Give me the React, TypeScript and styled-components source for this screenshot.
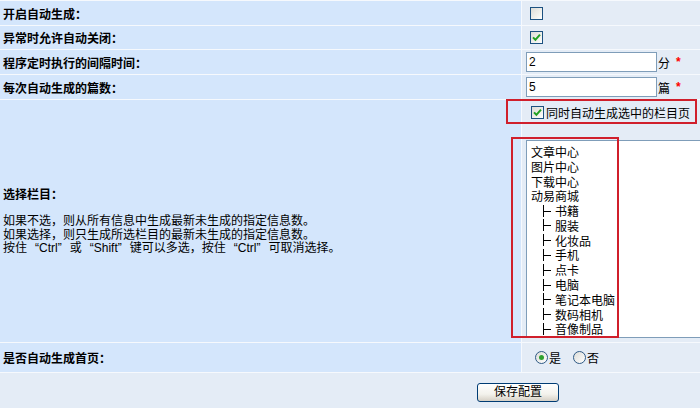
import styled, { createGlobalStyle } from 'styled-components';

const GlobalStyle = createGlobalStyle`
  body {
    margin: 0;
    overflow: hidden;
    background: #ffffff;
    font-family: "Liberation Sans", "Noto Sans CJK SC", sans-serif;
    font-size: 12px;
    color: #000;
  }
`;

interface listItem {
  name: string;
  sub?: boolean;
}

const columns: listItem[] = [
  { name: '文章中心' },
  { name: '图片中心' },
  { name: '下载中心' },
  { name: '动易商城' },
  { name: '书籍', sub: true },
  { name: '服装', sub: true },
  { name: '化妆品', sub: true },
  { name: '手机', sub: true },
  { name: '点卡', sub: true },
  { name: '电脑', sub: true },
  { name: '笔记本电脑', sub: true },
  { name: '数码相机', sub: true },
  { name: '音像制品', sub: true },
];

function CheckBox({ checked = false }: { checked?: boolean }) {
  return (
    <Box>
      {checked && (
        <svg width="9" height="9" viewBox="0 0 9 9">
          <path d="M1 4.4 L3.4 6.8 L8 1.6" fill="none" stroke="#21a121" strokeWidth="2" />
        </svg>
      )}
    </Box>
  );
}

function Radio({ checked = false }: { checked?: boolean }) {
  return <RadioDot $checked={checked} />;
}

// full-width quotes, like the song-ti glyphs
function Key({ children }: { children: string }) {
  return (
    <>
      <Quote $open>“</Quote>
      {children}
      <Quote>”</Quote>
    </>
  );
}

export default function App() {
  return (
    <>
      <GlobalStyle />
      <Table>
        <Label>开启自动生成：</Label>
        <Value>
          <CheckMargin>
            <CheckBox />
          </CheckMargin>
        </Value>

        <Label>异常时允许自动关闭：</Label>
        <Value>
          <CheckMargin>
            <CheckBox checked />
          </CheckMargin>
        </Value>

        <Label>程序定时执行的间隔时间：</Label>
        <Value>
          <TextInput defaultValue="2" readOnly />
          <Unit>分</Unit>
          <Star>*</Star>
        </Value>

        <Label>每次自动生成的篇数：</Label>
        <Value>
          <TextInput defaultValue="5" readOnly />
          <Unit>篇</Unit>
          <Star>*</Star>
        </Value>

        <HelpLabel>
          <strong>选择栏目：</strong>
          <HelpText>
            如果不选，则从所有信息中生成最新未生成的指定信息数。
            <br />
            如果选择，则只生成所选栏目的最新未生成的指定信息数。
            <br />
            按住<Key>Ctrl</Key>或<Key>Shift</Key>键可以多选，按住<Key>Ctrl</Key>可取消选择。
          </HelpText>
        </HelpLabel>
        <ColumnCell>
          <SyncRow>
            <CheckBox checked />
            <span>同时自动生成选中的栏目页</span>
          </SyncRow>
          <ListBox>
            {columns.map((item) => (
              <ListItem key={item.name} $sub={item.sub}>
                {item.sub && <Branch />}
                {item.name}
              </ListItem>
            ))}
          </ListBox>
          <SyncMark />
          <ListMark />
        </ColumnCell>

        <Label>是否自动生成首页：</Label>
        <RadioCell>
          <RadioOption>
            <Radio checked />是
          </RadioOption>
          <RadioOption>
            <Radio />否
          </RadioOption>
        </RadioCell>

        <Footer>
          <SaveButton>保存配置</SaveButton>
        </Footer>
      </Table>
    </>
  );
}

const Table = styled.div`
  display: grid;
  grid-template-columns: 521px 514px;
  grid-template-rows: 24px 23px 24px 24px 242px 29px 38px;
  gap: 1px;
  padding-top: 1px;
  width: 1036px;
  background: #f6f9fd;
`;

const Label = styled.div`
  display: flex;
  align-items: center;
  padding-left: 3px;
  background: #d4e6fc;
  font-weight: bold;
`;

const Value = styled.div`
  display: flex;
  align-items: center;
  padding-left: 4px;
  background: #e4ecf6;
`;

const CheckMargin = styled.span`
  display: inline-flex;
  margin-left: 4px;
`;

const Box = styled.span`
  display: inline-flex;
  align-items: center;
  justify-content: center;
  width: 13px;
  height: 13px;
  box-sizing: border-box;
  border: 1px solid #1c5180;
  background: linear-gradient(135deg, #dcdcd7 0%, #f4f4f0 70%, #ffffff 100%);
`;

const TextInput = styled.input`
  width: 131px;
  height: 20px;
  box-sizing: border-box;
  border: 1px solid #7f9db9;
  padding: 0 2px;
  margin: 0;
  font-family: "Liberation Sans", "Noto Sans CJK SC", sans-serif;
  font-size: 12px;
  background: #ffffff;
  outline: none;
`;

const Unit = styled.span`
  margin-left: 1px;
`;

const Star = styled.span`
  margin-left: 6px;
  color: #ff0000;
  font-weight: bold;
`;

const HelpLabel = styled.div`
  display: flex;
  flex-direction: column;
  justify-content: center;
  padding: 2px 0 0 3px;
  background: #d4e6fc;
  line-height: 14px;
`;

const HelpText = styled.div`
  margin-top: 13px;
  line-height: 13.8px;
`;

const Quote = styled.span<{ $open?: boolean }>`
  display: inline-block;
  width: 12px;
  text-align: ${(props) => (props.$open ? 'right' : 'left')};
`;

const ColumnCell = styled.div`
  position: relative;
  display: flex;
  flex-direction: column;
  align-items: flex-start;
  padding-left: 4px;
  background: #e4ecf6;
`;

const SyncRow = styled.div`
  display: flex;
  align-items: center;
  gap: 2px;
  height: 24px;
  padding-left: 5px;
`;

const ListBox = styled.div`
  width: 300px;
  height: 198px;
  box-sizing: border-box;
  margin-top: 16px;
  padding: 3px 4px;
  border: 1px solid #7f9db9;
  background: #ffffff;
  white-space: nowrap;
`;

const ListItem = styled.div<{ $sub?: boolean }>`
  display: flex;
  align-items: center;
  height: 14.8px;
  padding-left: ${(props) => (props.$sub ? '12px' : '0')};
`;

// the tree branch "├" drawn as two strokes
const Branch = styled.span`
  position: relative;
  flex: none;
  width: 12px;
  height: 12px;
  box-sizing: border-box;
  border-left: 1px solid #000;

  &::after {
    content: '';
    position: absolute;
    left: 0;
    top: 6px;
    width: 7px;
    height: 1px;
    background: #000;
  }
`;

const SyncMark = styled.div`
  position: absolute;
  left: -16px;
  top: -1px;
  width: 191px;
  height: 25px;
  box-sizing: border-box;
  border: 2px solid #d01f2b;
  pointer-events: none;
`;

const ListMark = styled.div`
  position: absolute;
  left: -11px;
  top: 37px;
  width: 108px;
  height: 201px;
  box-sizing: border-box;
  border: 2px solid #d01f2b;
  pointer-events: none;
`;

const RadioCell = styled.div`
  display: flex;
  align-items: center;
  gap: 12px;
  padding-left: 13px;
  background: #e4ecf6;
`;

const RadioOption = styled.label`
  display: flex;
  align-items: center;
  gap: 1px;
`;

const RadioDot = styled.span<{ $checked?: boolean }>`
  position: relative;
  width: 13px;
  height: 13px;
  box-sizing: border-box;
  border: 1px solid #2f5a85;
  border-radius: 50%;
  background: linear-gradient(135deg, #dcdcd7 0%, #ffffff 100%);

  &::after {
    content: '';
    display: ${(props) => (props.$checked ? 'block' : 'none')};
    position: absolute;
    left: 3px;
    top: 3px;
    width: 5px;
    height: 5px;
    border-radius: 50%;
    background: #2fa12f;
  }
`;

const Footer = styled.div`
  grid-column: 1 / -1;
  display: flex;
  align-items: center;
  justify-content: center;
  background: #e4ecf6;
`;

const SaveButton = styled.button`
  width: 82px;
  height: 19px;
  box-sizing: border-box;
  padding: 0;
  border: 1px solid #003c74;
  border-radius: 3px;
  background: linear-gradient(#ffffff 0%, #f3f2ec 60%, #d6d0c5 100%);
  font-family: "Liberation Sans", "Noto Sans CJK SC", sans-serif;
  font-size: 12px;
  line-height: 17px;
  color: #000;
`;
